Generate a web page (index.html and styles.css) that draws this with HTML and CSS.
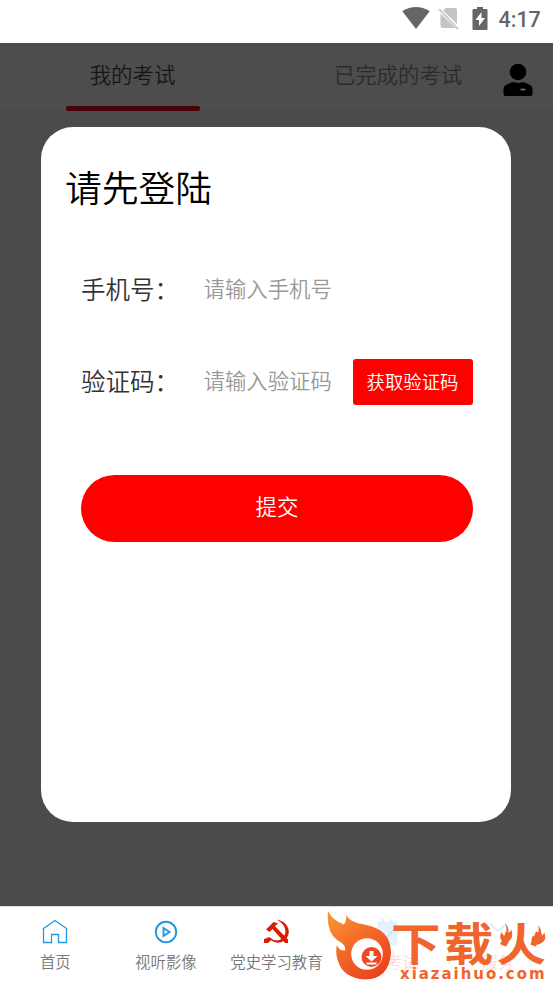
FILE: index.html
```html
<!DOCTYPE html>
<html lang="zh-CN">
<head>
<meta charset="utf-8">
<title>我的考试</title>
<link rel="stylesheet" href="styles.css">
</head>
<body>
<div class="status">
  <svg class="wifi" width="28" height="22" viewBox="0 0 28 22"><path d="M.3 4.2Q14-4.2 27.700 4.200L14 22Z"/></svg>
  <svg class="sim" width="21" height="24" viewBox="0 0 21 24"><path d="M8 1h9q2 0 2 2v14L5 3.500ZM2.500 6.500 17 20.500q-.5.500-1.500.5H4.500q-2 0-2-2Z"/><path class="slash" d="m1 2 19 20"/></svg>
  <svg class="battery" width="16" height="24" viewBox="0 0 16 24"><path fill-rule="evenodd" d="M5 0h6v2h3.500q1 0 1 1v19q0 1-1 1h-13q-1 0-1-1V3q0-1 1-1H5ZM9.500 5 3.500 13H7v6l6-8H9.500Z"/></svg>
  <span>4:17</span>
</div>
<main class="screen">
  <header class="header">
    <div class="tab active"><span>我的考试</span></div>
    <div class="tab"><span>已完成的考试</span></div>
    <svg class="user" width="30" height="34" viewBox="0 0 30 34"><circle cx="15" cy="9" r="8.300"/><path d="M4 21.500q4-2.500 7-2.500 4 1.800 8 0 3 0 7 2.500 3.500 1.500 3.500 4.500v5q0 2-2 2H2.500Q.5 33 .5 31v-5q0-3 3.500-4.500Z"/><path class="badge" d="M17.500 26.500h5"/></svg>
  </header>
  <section class="dialog">
    <h1>请先登陆</h1>
    <form class="form">
      <div class="row"><label>手机号：</label><span class="hint">请输入手机号</span></div>
      <div class="row"><label>验证码：</label><span class="hint">请输入验证码</span><button type="button" class="code">获取验证码</button></div>
      <button type="button" class="submit">提交</button>
    </form>
  </section>
</main>
<nav class="nav">
  <div class="item"><svg width="28" height="28" viewBox="0 0 28 28"><path class="line thin" d="M2.500 10.500 14 2.500l11.500 8v14h-8v-8h-7v8h-8Z"/></svg><span>首页</span></div>
  <div class="item"><svg width="28" height="28" viewBox="0 0 28 28"><circle class="line" cx="14" cy="14" r="10.200"/><path class="line" d="M11.500 10v8l6-4Z"/></svg><span>视听影像</span></div>
  <div class="item"><svg width="28" height="28" viewBox="0 0 28 28"><path class="party" d="M14.500 1.500C30 4 30 21 19 24.200q-6 1.500-10-2L6 25H2v-4l3-1 2-1q7 6 13 1.500C26 16 24 6 14.500 1.500Z"/><path class="party" d="m4 11.500 7.500-7.500 4.500 1.200-3 3L26 21.500v3.500h-3L10.500 11 7.500 14Z"/></svg><span>党史学习教育</span></div>
  <div class="item faded"><svg width="28" height="32" viewBox="0 0 28 32"><path class="pale" d="M3 4h4V1h4v3h6V1h4v3h5v27H3Z"/><path class="check" d="m9 17 5 5 8-9"/></svg><span class="current">我的考试</span></div>
  <div class="item faded"><svg width="28" height="28" viewBox="0 0 28 28"><path class="check blue" d="m6 6 8 7 8-7"/></svg><span class="current">服务</span></div>
  <div class="brand">
    <svg class="flame" width="66" height="72" viewBox="0 0 66 72">
      <defs><linearGradient id="fire" x1="0" y1="0" x2=".7" y2="1"><stop offset="0" stop-color="#f99a35"/><stop offset=".5" stop-color="#f46a29"/><stop offset="1" stop-color="#ea431f"/></linearGradient></defs>
      <path fill="url(#fire)" d="M1 0Q6 10 17 13.500 20 10 19 4q5 8 18 9.500Q64 18 64 42 62 68 38 68.500 16 67 11 50 8 42 10 34q2 6 8 5.500Q20 34 10 29-1 20 1 0Z"/>
      <circle cx="40" cy="43" r="15.800" fill="#fff"/><circle cx="44.500" cy="46" r="10" fill="#ee4922"/>
      <path fill="#fff" d="M42.500 40h4v5h4l-6 5.500-6-5.500h4ZM39.500 51.500h10v2h-10Z"/>
    </svg>
    <div class="words"><div class="name"><span>下</span><span>载</span><span>火</span></div><div class="site">xiazaihuo.com</div></div>
    <svg class="sparks" width="48" height="24" viewBox="0 0 48 24"><path d="M6 0q5 6 3 10 3-1 3-4 3 7-1 11-5 4-9 0-2-5 1-8 1 4 3 4 3-5 0-13ZM39 2q5 6 2 11 4 0 4-4 3 7-1 10-6 5-11 1-2-5 2-8 0 4 2 3 4-5 2-13Z"/></svg>
  </div>
</nav>
</body>
</html>
```
FILE: styles.css
```css
* { box-sizing: border-box; }
body {
  margin: 0;
  width: 553px;
  height: 983px;
  overflow: hidden;
  display: flex;
  flex-direction: column;
  font-family: "Noto Sans CJK SC", sans-serif;
  font-weight: 350;
}
.status {
  height: 43px;
  display: flex;
  align-items: flex-start;
  padding: 7px 0 0 402px;
  background: #fff;
  color: #666;
  fill: #666;
  font: 500 21.500px/25px Roboto, sans-serif;
}
.status span { margin-left: 10.500px; }
.sim { margin-left: 8px; fill: #c4c4c4; }
.slash { stroke: #c4c4c4; stroke-width: 1.8; }
.battery { margin-left: 13px; }
.screen { height: 863px; background: #4b4b4b; }
.header {
  height: 68px;
  display: flex;
  background: #4d4d4d;
  border-bottom: 1px solid #494949;
}
.tab {
  flex: none;
  width: 265px;
  display: flex;
  flex-direction: column;
  align-items: center;
  color: #2b2b2b;
  font-size: 21.400px;
  line-height: 62px;
}
.tab + .tab { width: 266px; }
.active { color: #161616; }
.active::after {
  content: "";
  flex: none;
  width: 134px;
  height: 5px;
  margin: 1px 0 0 1px;
  border-radius: 2px;
  background: #4a0008;
}
.user { flex: none; margin: 20px 0 0 -28.500px; }
.badge { stroke: #777; stroke-width: 1.500; }
.dialog {
  width: 470px;
  height: 694.500px;
  margin: 16.400px 0 0 41.400px;
  padding: 30.600px 38px 0 39.600px;
  border-radius: 32px;
  background: #fff;
}
h1 {
  margin: 0 0 0 -16px;
  color: #000;
  font-size: 36.800px;
  font-weight: inherit;
  line-height: 56px;
}
.form { padding-top: 53px; }
.row { height: 46px; margin-bottom: 46px; display: flex; align-items: center; }
label { width: 122.500px; color: #333; font-size: 24.500px; line-height: 42px; margin-top: -1px; }
.hint { width: 149.500px; color: #999; font-size: 21.400px; line-height: 38px; margin-top: -3px; }
button { border: 0; padding: 0; background: #f00; color: #fff; font-family: inherit; font-weight: inherit; }
.code { width: 120px; height: 46px; padding: 0 1px 2px 0; border-radius: 3px; font-size: 18.400px; }
.submit {
  display: block;
  width: 392px;
  height: 67px;
  margin-top: 70px;
  padding-bottom: 6px;
  border-radius: 34px;
  font-size: 21.400px;
}
.nav {
  position: relative;
  height: 77px;
  display: flex;
  background: #fff;
  border-top: 1px solid #ddd;
}
.item { width: 110.600px; padding-top: 11px; display: flex; flex-direction: column; align-items: center; }
.item svg { flex: none; }
.item span { margin-top: 3px; color: #777; font-size: 15.400px; line-height: 24px; }
.line { fill: none; stroke: #2299db; stroke-width: 1.900; }
.thin { stroke-width: 1.300; }
.party { fill: #d81e06; }
.faded svg { height: 28px; overflow: visible; }
.pale { fill: #e4f2fb; }
.check { fill: none; stroke: #c9e5f5; stroke-width: 2; }
.blue { stroke: #dceffa; }
.item .current { color: #fad9d7; }
.brand { position: absolute; left: 327px; top: 4px; width: 226px; height: 72px; }
.flame { position: absolute; left: 0; top: 0; }
.words { position: absolute; left: 64px; top: 7px; color: #f0652b; }
.name { display: flex; font-size: 45px; font-weight: 700; line-height: 47px; transform: scaleX(1.1); transform-origin: left; }
.name span { width: 48px; }
.site { margin: 1px 0 0 9px; font: 700 15px/17px "DejaVu Sans", sans-serif; letter-spacing: 1.950px; }
.sparks { position: absolute; left: 172px; top: 12px; fill: #f0652b; }
```
